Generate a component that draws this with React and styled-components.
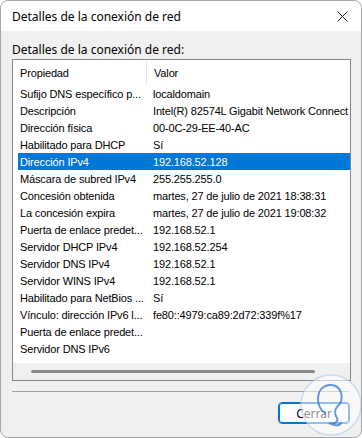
import styled, { createGlobalStyle } from "styled-components";

const GlobalStyle = createGlobalStyle`
body{
    margin: 0;
    background: #ffffff;
}
`

const rows = [
    ["Sufijo DNS específico p...", "localdomain"],
    ["Descripción", "Intel(R) 82574L Gigabit Network Connect"],
    ["Dirección física", "00-0C-29-EE-40-AC"],
    ["Habilitado para DHCP", "Sí"],
    ["Dirección IPv4", "192.168.52.128"],
    ["Máscara de subred IPv4", "255.255.255.0"],
    ["Concesión obtenida", "martes, 27 de julio de 2021 18:38:31"],
    ["La concesión expira", "martes, 27 de julio de 2021 19:08:32"],
    ["Puerta de enlace predet...", "192.168.52.1"],
    ["Servidor DHCP IPv4", "192.168.52.254"],
    ["Servidor DNS IPv4", "192.168.52.1"],
    ["Servidor WINS IPv4", "192.168.52.1"],
    ["Habilitado para NetBios ...", "Sí"],
    ["Vínculo: dirección IPv6 l...", "fe80::4979:ca89:2d72:339f%17"],
    ["Puerta de enlace predet...", ""],
    ["Servidor DNS IPv6", ""],
];

const App = ()=>{
    return(
        <>
            <GlobalStyle />
            <Window>
                <TitleBar>
                    <span>Detalles de la conexión de red</span>
                    <CloseBtn>
                        <svg width="11" height="11" viewBox="0 0 11 11">
                            <path d="M0.5 0.5 L10.5 10.5 M10.5 0.5 L0.5 10.5" stroke="#1a1a1a" strokeWidth="1" fill="none" />
                        </svg>
                    </CloseBtn>
                </TitleBar>
                <Body>
                    <GroupLabel>Detalles de la conexión de red:</GroupLabel>
                    <ListBox>
                        <HeaderRow>
                            <PropCell>Propiedad</PropCell>
                            <HeaderDivider />
                            <ValueCell>Valor</ValueCell>
                        </HeaderRow>
                        <Rows>
                            {rows.map(([prop, value], i) => (
                                <Row key={i} $selected={prop === "Dirección IPv4"}>
                                    <PropCell>{prop}</PropCell>
                                    <ValueCell>{value}</ValueCell>
                                </Row>
                            ))}
                        </Rows>
                        <ScrollTrack>
                            <ScrollThumb />
                        </ScrollTrack>
                    </ListBox>
                    <Separator />
                    <Footer>
                        <CloseButton>Cerrar</CloseButton>
                    </Footer>
                </Body>
                <Watermark>
                    <svg width="64" height="64" viewBox="0 0 64 64">
                        <circle cx="32" cy="32" r="30" fill="rgba(255,255,255,0.55)" stroke="rgba(170,200,235,0.6)" strokeWidth="1.5" />
                        <path d="M26 40 C16 34 16 14 30 12 C44 11 46 28 38 34 C35 37 36 42 38 45 C40 49 34 52 30 50 C34 52 40 54 42 50" stroke="rgba(40,110,200,0.7)" strokeWidth="2" fill="none" strokeLinecap="round" />
                    </svg>
                </Watermark>
            </Window>
        </>
    );
};
export default App


const Window = styled.div`
position: relative;
width: 362px;
height: 438px;
box-sizing: border-box;
border: 1px solid #a6a6a6;
border-radius: 8px;
overflow: hidden;
background-color: #f0f0f0;
display: flex;
flex-direction: column;
font-family: "Liberation Sans", Arial, sans-serif;
color: #000;
`
const TitleBar = styled.div`
height: 30px;
flex-shrink: 0;
background-color: #ffffff;
display: flex;
align-items: center;
justify-content: space-between;
padding: 0 0 0 11px;
font-family: "Noto Sans", sans-serif;
font-size: 12px;
`
const CloseBtn = styled.div`
width: 34px;
display: flex;
align-items: center;
justify-content: center;
padding-right: 2px;
`
const Body = styled.div`
flex: 1;
display: flex;
flex-direction: column;
padding: 10px 10px 0 11px;
`
const GroupLabel = styled.div`
font-family: "Noto Sans", sans-serif;
font-size: 12px;
line-height: 17px;
height: 18px;
`
const ListBox = styled.div`
height: 322px;
box-sizing: border-box;
border: 1px solid #828790;
background-color: #ffffff;
display: flex;
flex-direction: column;
font-size: 11px;
letter-spacing: -0.15px;
`
const HeaderRow = styled.div`
height: 25px;
flex-shrink: 0;
display: flex;
align-items: center;
padding-left: 5px;
`
const HeaderDivider = styled.div`
width: 1px;
height: 22px;
background-color: #e5e5e5;
margin: 0 5px 0 -5px;
`
const Rows = styled.div`
flex: 1;
display: flex;
flex-direction: column;
`
const Row = styled.div`
height: 17px;
display: flex;
align-items: center;
margin-left: 5px;
background-color: ${p => p.$selected ? "#0078d7" : "transparent"};
color: ${p => p.$selected ? "#ffffff" : "#000000"};
`
const PropCell = styled.div`
width: 131px;
flex-shrink: 0;
padding-left: 2px;
white-space: nowrap;
overflow: hidden;
`
const ValueCell = styled.div`
flex: 1;
padding-left: 2px;
white-space: nowrap;
overflow: hidden;
`
const ScrollTrack = styled.div`
height: 17px;
flex-shrink: 0;
background-color: #f0f0f0;
display: flex;
align-items: center;
padding-left: 18px;
`
const ScrollThumb = styled.div`
width: 284px;
height: 3px;
border-radius: 2px;
background-color: #8a8a8a;
`
const Separator = styled.div`
height: 1px;
width: 337px;
background-color: #a0a0a0;
margin-top: 10px;
`
const Footer = styled.div`
display: flex;
justify-content: flex-end;
padding: 10px 1px 0 0;
`
const CloseButton = styled.button`
width: 72px;
height: 22px;
box-sizing: border-box;
border: 1px solid #0078d4;
border-radius: 4px;
background-color: #fdfdfd;
font-family: "Noto Sans", sans-serif;
font-size: 12px;
color: #000;
padding: 0;
box-shadow: inset 0 0 0 1px #0078d4;
`
const Watermark = styled.div`
position: absolute;
right: -2px;
bottom: -4px;
pointer-events: none;
`
